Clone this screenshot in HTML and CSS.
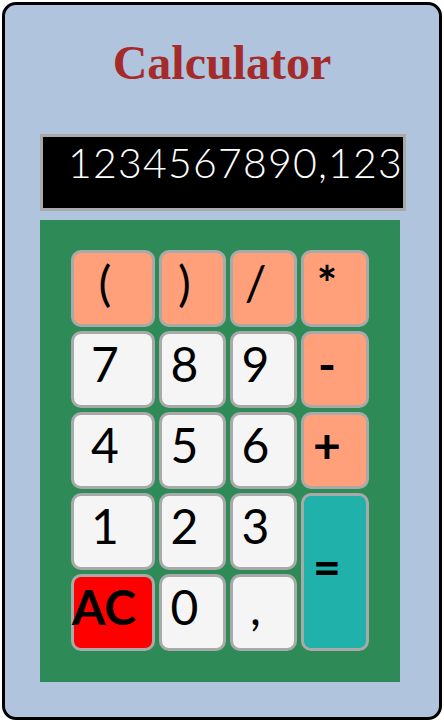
FILE: index.html
```html
<!DOCTYPE html>
<html>
<head>
<meta charset="utf-8">
<link rel="stylesheet" href="styles.css">
</head>
<body>
<div class="calc">
  <h1 class="title">Calculator</h1>
  <div class="display">1234567890,123</div>
  <div class="pad">
    <div class="keys">
      <button class="key op">(</button>
      <button class="key op">)</button>
      <button class="key op">/</button>
      <button class="key op bold">*</button>
      <button class="key">7</button>
      <button class="key">8</button>
      <button class="key">9</button>
      <button class="key op bold">-</button>
      <button class="key">4</button>
      <button class="key">5</button>
      <button class="key">6</button>
      <button class="key op bold">+</button>
      <button class="key">1</button>
      <button class="key">2</button>
      <button class="key">3</button>
      <button class="key eq bold">=</button>
      <button class="key ac bold">AC</button>
      <button class="key">0</button>
      <button class="key">,</button>
    </div>
  </div>
</div>
</body>
</html>
```
FILE: styles.css
```css
html, body {
  margin: 0;
  padding: 0;
}
body {
  background: #ffffff;
}
.calc {
  box-sizing: border-box;
  margin: 2px;
  width: 440px;
  height: 718px;
  border: 3px solid #000;
  border-radius: 14px;
  background: #b0c4de;
  padding: 30px 0 0 35px;
}
.title {
  margin: 0 0 44px 0;
  font-family: "Liberation Serif", serif;
  font-weight: bold;
  font-size: 48px;
  color: #a52a2a;
  text-align: center;
  padding-right: 35px;
}
.display {
  box-sizing: border-box;
  width: 366px;
  height: 77px;
  border: 3px solid #a9a9a9;
  background: #000;
  color: #fff;
  font-family: Lato, sans-serif;
  font-weight: 300;
  font-size: 41px;
  letter-spacing: 1.2px;
  line-height: 48px;
  padding: 2px 0 0 0;
  text-align: right;
  overflow: hidden;
  white-space: nowrap;
}
.pad {
  box-sizing: border-box;
  margin-top: 9px;
  width: 360px;
  height: 462px;
  background: #2e8b57;
  padding: 30px 0 0 31px;
}
.keys {
  display: grid;
  grid-template-columns: 84px 67px 67px 68px;
  grid-auto-rows: 77px;
  column-gap: 4px;
  row-gap: 4px;
}
.key {
  box-sizing: border-box;
  margin: 0;
  border: 3px solid #a9a9a9;
  border-radius: 10px;
  background: #f5f5f5;
  color: #000;
  font-family: Lato, sans-serif;
  font-size: 48px;
  font-weight: 400;
  padding: 0 16px 12px 0;
  line-height: normal;
  white-space: nowrap;
  overflow: visible;
  text-align: center;
}
.op {
  background: #ffa07a;
}
.bold {
  font-weight: bold;
}
.eq {
  background: #20b2aa;
  grid-column: 4;
  grid-row: 4 / span 2;
}
.ac {
  background: #ff0000;
  padding: 0 0 12px 0;
  text-indent: -2px;
  text-align: left;
}
```
